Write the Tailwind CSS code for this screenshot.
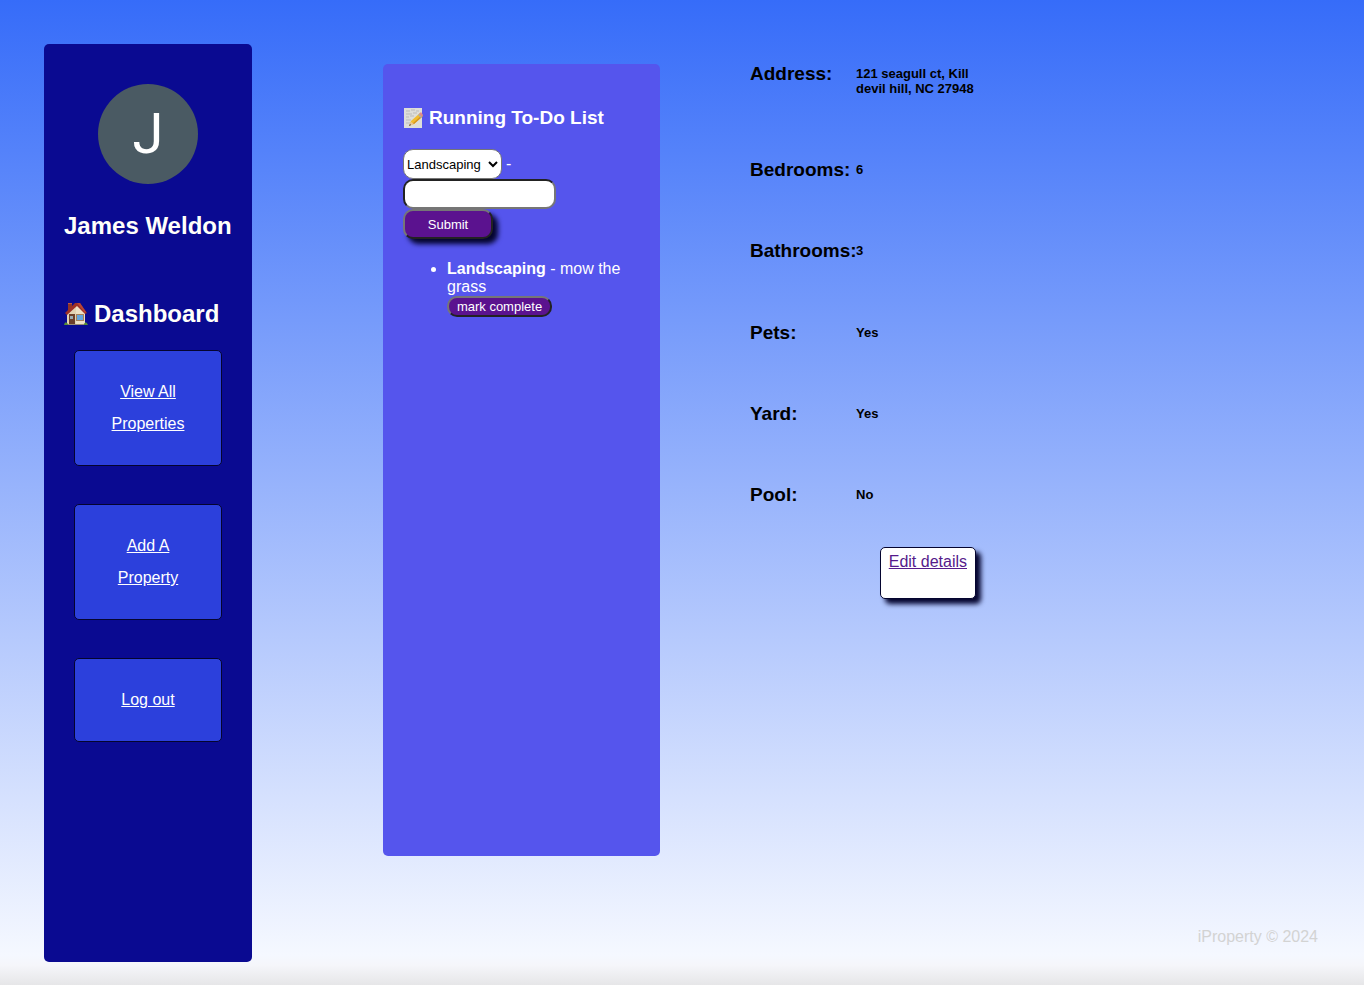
<!DOCTYPE html>
<html lang="en">
<head>
<meta charset="utf-8">
<meta name="viewport" content="width=device-width, initial-scale=1">
<title>iProperty</title>
<script src="https://cdn.jsdelivr.net/npm/@tailwindcss/browser@4"></script>
</head>
<body class="min-h-screen flex flex-col bg-[linear-gradient(to_bottom,#366cf9_0%,#f5f8ff_97%,#f5f6fa_98%,#e6e6e8_100%)] font-['Liberation_Sans',Arial,sans-serif] text-base leading-[18px] text-black">
<div class="flex grow items-start pl-11 pt-11 pr-11 pb-[23px]">
  <aside class="flex w-52 shrink-0 flex-col self-stretch rounded-[5px] bg-[#0a0a91] px-5 pt-10 text-white">
    <div class="flex size-[100px] items-center justify-center self-center rounded-full bg-[#4a5a63] font-[Roboto,sans-serif] text-[56px] leading-none">J</div>
    <h2 class="mt-7 whitespace-nowrap text-2xl leading-7 font-bold text-[#fffffa]">James Weldon</h2>
    <h2 class="mt-15 flex items-center gap-1.5 text-2xl leading-7 font-bold text-[#fffffa]">
      <svg class="size-6" viewBox="0 0 24 24" aria-hidden="true">
        <path d="M4 2h4v7H4z" fill="#8f3428"/><path d="M4 1h4v1H4z" fill="#b8574a"/>
        <path d="M3 11l9-9 9 9v11H3z" fill="#eee0c6"/>
        <path d="M3 11l9-9v20H3z" fill="#e2d2b4"/>
        <path d="M1 11L11 1h5l7 10-2 1-8-8-10 9z" fill="#9d3027"/>
        <path d="M13 1h3l6 9-1 1z" fill="#b84436"/>
        <path d="M5 12h6v10H5z" fill="#6d3f2b"/><path d="M6 14h3v3H6z" fill="#9aabb2"/>
        <path d="M12 12h8v7h-8z" fill="#a8815b"/><path d="M13 13h6v5h-6z" fill="#64a5de"/>
        <path d="M0 23q1-5 4-1v1zM20 22q2-4 4 1h-4z" fill="#588c36"/>
        <path d="M4 22h16v1H4z" fill="#9a8b76"/>
      </svg>
      Dashboard
    </h2>
    <nav class="mx-2.5 mt-[22px] mb-10 flex flex-col gap-[38px] text-center leading-8">
      <div class="rounded-[5px] border border-[#05052f] bg-[#2c40dc] px-7 py-[25px]"><a href="#" class="underline">View All Properties</a></div>
      <div class="rounded-[5px] border border-[#05052f] bg-[#2c40dc] px-7 py-[25px]"><a href="#" class="underline">Add A Property</a></div>
      <div class="rounded-[5px] border border-[#05052f] bg-[#2c40dc] px-7 py-[25px]"><a href="#" class="underline">Log out</a></div>
    </nav>
  </aside>

  <main class="ml-[131px] flex grow items-start pt-5">
    <section class="min-h-[792px] w-[277px] shrink-0 rounded-[5px] bg-[#5555ed] px-5 pt-[43px] text-white">
      <h3 class="flex items-center gap-1.5 text-[19px] leading-[22px] font-bold">
        <svg class="size-5" viewBox="0 0 20 20" aria-hidden="true">
          <path d="M1 0h18v20H1z" fill="#deded9"/>
          <path d="M3 3h4M8 2h4M13 3h3M3 6h6M10 5h4M3 9h3M7 8h4M3 12h5M3 15h4" stroke="#bbb" fill="none"/>
          <path d="M6 18l2-5 9-8 3 3-9 8z" fill="#f1bd31"/>
          <path d="M9 16l9-8 1 1-8 7z" fill="#d6931e"/>
          <path d="M16 6l2-2 2 3-2 2z" fill="#e58a87"/>
          <path d="M15 7l1-1 3 3-1 1z" fill="#a7adb0"/>
          <path d="M6 18l2-4 3 2z" fill="#e8c69a"/><path d="M6 18l1-2 1 1z" fill="#333"/>
        </svg>
        Running To-Do List
      </h3>
      <form class="mt-5 text-[13px]">
        <div class="flex items-center gap-1">
          <div class="relative">
            <select aria-label="Category" class="block h-[30px] w-[99px] appearance-none rounded-[10px] border border-[#767676] bg-white pl-[3px] text-[13px] leading-[15px] text-black"><option>Landscaping</option></select>
            <svg class="pointer-events-none absolute right-1 top-3 h-[7px] w-2.5" viewBox="0 0 10 7" fill="none" stroke="black" stroke-width="2" aria-hidden="true"><path d="M1 1l4 4 4-4"/></svg>
          </div>
          <span class="text-base leading-[18px]">-</span>
        </div>
        <input type="text" aria-label="Task" class="block h-[30px] w-[153px] rounded-[10px] border-2 border-[#767676] border-t-[#222] border-l-[#222] bg-white px-2 text-black">
        <button type="button" class="block h-[30px] w-[90px] rounded-[10px] border-2 border-[#767676] border-r-[#222] border-b-[#222] bg-[#5b128f] text-[13px] leading-[15px] shadow-[5px_5px_5px_#05052f]">Submit</button>
      </form>
      <ul class="mt-[21px] list-disc pl-11">
        <li><strong>Landscaping</strong> - mow the grass
          <button type="button" class="block h-[21px] w-[105px] whitespace-nowrap rounded-[10px] border-2 border-[#767676] border-r-[#222] border-b-[#222] bg-[#5b128f] text-[13px] leading-[15px]">mark complete</button>
        </li>
      </ul>
    </section>

    <section class="ml-[90px] flex w-[226px] flex-col">
      <dl class="-mt-px flex flex-col gap-[59px] font-bold">
        <div class="flex min-h-[37px]"><dt class="w-[106px] shrink-0 whitespace-nowrap text-[19px] leading-[22px]">Address:</dt><dd class="whitespace-nowrap pt-[3px] text-[13px] leading-[15px]">121 seagull ct, Kill<br>devil hill, NC 27948</dd></div>
        <div class="flex"><dt class="w-[106px] shrink-0 whitespace-nowrap text-[19px] leading-[22px]">Bedrooms:</dt><dd class="pt-[3px] text-[13px] leading-[15px]">6</dd></div>
        <div class="flex"><dt class="w-[106px] shrink-0 whitespace-nowrap text-[19px] leading-[22px]">Bathrooms:</dt><dd class="pt-[3px] text-[13px] leading-[15px]">3</dd></div>
        <div class="flex pt-px"><dt class="w-[106px] shrink-0 whitespace-nowrap text-[19px] leading-[22px]">Pets:</dt><dd class="pt-[3px] text-[13px] leading-[15px]">Yes</dd></div>
        <div class="flex"><dt class="w-[106px] shrink-0 whitespace-nowrap text-[19px] leading-[22px]">Yard:</dt><dd class="pt-[3px] text-[13px] leading-[15px]">Yes</dd></div>
        <div class="flex"><dt class="w-[106px] shrink-0 whitespace-nowrap text-[19px] leading-[22px]">Pool:</dt><dd class="pt-[3px] text-[13px] leading-[15px]">No</dd></div>
      </dl>
      <div class="mt-[41px] h-[52px] self-end rounded-[5px] border border-[#05052f] bg-white px-2 pt-[5px] shadow-[5px_5px_5px_#05052f]"><a href="#" class="whitespace-nowrap text-[#551a8b] underline">Edit details</a></div>
    </section>
  </main>
  <footer class="shrink-0 self-end pb-4 pr-0.5 text-[#d3d3d3]">iProperty © 2024</footer>
</div>
</body>
</html>
